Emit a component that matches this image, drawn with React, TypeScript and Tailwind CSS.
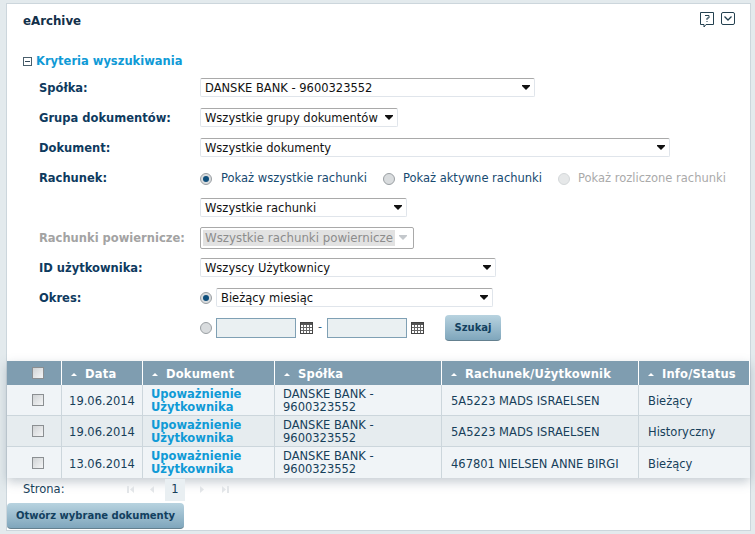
import { ReactNode } from 'react';

const rows = [
  { date: '19.06.2014', account: '5A5223 MADS ISRAELSEN', status: 'Bieżący', alt: false },
  { date: '19.06.2014', account: '5A5223 MADS ISRAELSEN', status: 'Historyczny', alt: true },
  { date: '13.06.2014', account: '467801 NIELSEN ANNE BIRGI', status: 'Bieżący', alt: false },
];

function Arrow({ disabled }: { disabled?: boolean }) {
  return (
    <svg width="8" height="5" viewBox="0 0 8 5" className="shrink-0">
      <path d="M0 0h8v1L4 5 0 1z" fill={disabled ? '#c4c8cc' : '#111'} />
    </svg>
  );
}

function Select({ width, children }: { width: string; children: ReactNode }) {
  return (
    <div className={`${width} h-[19px] flex items-center justify-between pl-[4px] pr-[4px] bg-white border border-[#e0e5eb] border-t-[#a9a9a9] rounded-[2px] text-[11.5px] text-[#111] whitespace-nowrap`}>
      <span className="pt-[2px]">{children}</span>
      <Arrow />
    </div>
  );
}

function Radio({ checked, disabled }: { checked?: boolean; disabled?: boolean }) {
  return (
    <span className={`w-[12px] h-[12px] shrink-0 rounded-full border flex items-center justify-center ${disabled ? 'border-[#d4d8da] bg-[#e6e8e9]' : 'border-[#9a9fa3] bg-[#d9dcde]'}`}>
      {checked && <span className="w-[6px] h-[6px] rounded-full bg-[#0f4f7c]" />}
    </span>
  );
}

function Row({ label, muted, children }: { label?: string; muted?: boolean; children: ReactNode }) {
  return (
    <div className="flex items-center h-[30px] pb-px">
      <div className={`w-[161px] shrink-0 pt-[2px] text-[11.5px] font-bold ${muted ? 'text-[#a3a3a3]' : 'text-[#0e3a5e]'}`}>{label}</div>
      {children}
    </div>
  );
}

function CalendarIcon() {
  return (
    <svg width="13" height="12" viewBox="0 0 13 12" className="shrink-0">
      <rect x="0.500" y="0.500" width="12" height="11" fill="#fff" stroke="#444" />
      <rect x="1" y="1" width="11" height="2" fill="#555" />
      <path d="M3.500 3v8M6.500 3v8M9.500 3v8M1 5.500h11M1 8.500h11" stroke="#666" />
    </svg>
  );
}

function CheckBox() {
  return <span className="block w-[12px] h-[12px] border border-[#8b8f92] bg-gradient-to-br from-[#d0d3d5] to-[#f4f5f6]" />;
}

function SortHeader({ width, children }: { width: string; children: ReactNode }) {
  return (
    <div className={`${width} shrink-0 flex items-center gap-[8px] pl-[9px] pt-[3px] border-r border-white text-[11.5px] font-bold text-white tracking-[0.2px] whitespace-nowrap`}>
      <svg width="6" height="3" viewBox="0 0 6 3" className="shrink-0"><path d="M3 0l3 3H0z" fill="#fff" /></svg>
      {children}
    </div>
  );
}

function PagerIcon({ d }: { d: string }) {
  return (
    <svg width="7" height="7" viewBox="0 0 7 7" className="shrink-0"><path d={d} fill="#e2e5e8" /></svg>
  );
}

export default function App() {
  return (
    <div className="w-[755px] h-[534px] overflow-hidden bg-[#e3eaed] pt-[3px] pl-[6px] font-['DejaVu_Sans',sans-serif]">
      <div className="w-[745px] h-[528px] bg-white border border-[#ccd6dc] flex flex-col">
        {/* Header */}
        <div className="flex justify-between pl-[16px] pr-[15px] pt-[8px] h-[49px]">
          <div className="mt-[2px] text-[11.8px] font-bold text-[#12304a] leading-[14px]">eArchive</div>
          <div className="flex gap-[7px] h-[15px]">
            <svg width="14" height="16" viewBox="0 0 14 16">
              <path d="M.5.500h13v12H6L4 15v-2.500H.5z" fill="none" stroke="#23404f" />
              <path d="M5 3.500h4v2.500H7v2M7 9v1" fill="none" stroke="#23404f" />
            </svg>
            <svg width="14" height="14" viewBox="0 0 14 14">
              <rect x=".5" y=".5" width="13" height="12" rx="1.500" fill="none" stroke="#23404f" />
              <path d="M3.500 4.500L7 8l3.500-3.500" fill="none" stroke="#23404f" strokeWidth="1.300" />
            </svg>
          </div>
        </div>

        {/* Kryteria */}
        <div className="flex items-center gap-[4px] pl-[16px] h-[16px] mb-[4px]">
          <span className="w-[9px] h-[9px] border border-[#4a5f6c] flex items-center justify-center">
            <span className="w-[5px] h-px bg-[#33495a]" />
          </span>
          <span className="pt-px text-[11.5px] font-bold text-[#0f9ad6]">Kryteria wyszukiwania</span>
        </div>

        {/* Form */}
        <div className="pl-[32px]">
          <Row label="Spółka:"><Select width="w-[335px]">DANSKE BANK - 9600323552</Select></Row>
          <Row label="Grupa dokumentów:"><Select width="w-[198px]">Wszystkie grupy dokumentów</Select></Row>
          <Row label="Dokument:"><Select width="w-[470px]">Wszystkie dokumenty</Select></Row>
          <Row label="Rachunek:">
            <div className="flex items-center pt-[2px] text-[11.5px] whitespace-nowrap">
              <Radio checked />
              <span className="ml-[9px] text-[#174a70]">Pokaż wszystkie rachunki</span>
              <span className="ml-[16px]"><Radio /></span>
              <span className="ml-[8px] text-[#174a70]">Pokaż aktywne rachunki</span>
              <span className="ml-[16px]"><Radio disabled /></span>
              <span className="ml-[8px] text-[#aaaaaa]">Pokaż rozliczone rachunki</span>
            </div>
          </Row>
          <Row><Select width="w-[207px]">Wszystkie rachunki</Select></Row>
          <Row label="Rachunki powiernicze:" muted>
            <div className="w-[214px] h-[22px] flex items-center justify-between pl-[2px] pr-[6px] border border-[#a9a9a9] rounded-[2px] text-[11.8px] text-[#8c8c8c] whitespace-nowrap">
              <span className="bg-[#e2e2e2] px-[2px] leading-[16px]">Wszystkie rachunki powiernicze</span>
              <Arrow disabled />
            </div>
          </Row>
          <Row label="ID użytkownika:"><Select width="w-[296px]">Wszyscy Użytkownicy</Select></Row>
          <Row label="Okres:">
            <div className="flex items-center gap-[4px]">
              <Radio checked />
              <Select width="w-[277px]">Bieżący miesiąc</Select>
            </div>
          </Row>
          <Row>
            <div className="flex items-center">
              <Radio />
              <span className="ml-[4px] w-[80px] h-[20px] bg-[#eaf0f2] border border-[#7fa0b4]" />
              <span className="ml-[4px]"><CalendarIcon /></span>
              <span className="mx-[5px] text-[11px] text-[#174a70]">-</span>
              <span className="w-[80px] h-[20px] bg-[#eaf0f2] border border-[#7fa0b4]" />
              <span className="ml-[4px]"><CalendarIcon /></span>
              <button className="ml-[21px] w-[56px] h-[26px] rounded-[4px] bg-gradient-to-b from-[#b8d3e0] to-[#7fa6bc] border-b border-[#64808f] text-[10px] font-bold text-[#12405f]">Szukaj</button>
            </div>
          </Row>
        </div>

        {/* Table */}
        <div className="mt-[18px] shadow-[0_4px_10px_rgba(90,110,125,0.35)]">
          <div className="flex h-[24px] bg-[#7f9db0]">
            <div className="w-[55px] shrink-0 flex items-center justify-center pl-[8px] border-r border-white"><CheckBox /></div>
            <SortHeader width="w-[81px]">Data</SortHeader>
            <SortHeader width="w-[132px]">Dokument</SortHeader>
            <SortHeader width="w-[167px]">Spółka</SortHeader>
            <SortHeader width="w-[197px]">Rachunek/Użytkownik</SortHeader>
            <SortHeader width="flex-1">Info/Status</SortHeader>
          </div>
          {rows.map((row, i) => (
            <div key={i} className={`flex h-[31px] text-[11.5px] leading-[13px] text-[#173f5a] ${row.alt ? 'bg-[#e6ecef]' : 'bg-[#f0f4f7]'} ${i < 2 ? 'border-b border-[#ccd6dc]' : ''}`}>
              <div className="w-[55px] shrink-0 flex items-center justify-center pl-[8px] border-r border-[#ccd6dc]"><CheckBox /></div>
              <div className="w-[81px] shrink-0 flex items-center justify-center pt-[3px] border-r border-[#ccd6dc]">{row.date}</div>
              <div className="w-[132px] shrink-0 pl-[8px] pt-[3px] border-r border-[#ccd6dc] font-bold text-[#0f9ad6]">Upoważnienie<br />Użytkownika</div>
              <div className="w-[167px] shrink-0 pl-[8px] pt-[3px] border-r border-[#ccd6dc]">DANSKE BANK -<br />9600323552</div>
              <div className="w-[197px] shrink-0 flex items-center pl-[9px] pt-[3px] border-r border-[#ccd6dc] whitespace-nowrap">{row.account}</div>
              <div className="flex-1 flex items-center pl-[9px] pt-[3px]">{row.status}</div>
            </div>
          ))}
        </div>

        {/* Pager */}
        <div className="flex items-center h-[23px] pl-[16px] text-[11.5px] text-[#173f5a]">
          <span className="w-[104px]">Strona:</span>
          <span className="w-[21px]"><PagerIcon d="M0 0h2v7H0zM7 0v7L3 3.500z" /></span>
          <span className="w-[17px]"><PagerIcon d="M6 0v7L2 3.500z" /></span>
          <span className="w-[20px] h-[22px] bg-[#e9eff2] flex items-center justify-center">1</span>
          <span className="ml-[14px] w-[23px]"><PagerIcon d="M1 0v7l4-3.500z" /></span>
          <span className="w-[20px]"><PagerIcon d="M0 0v7l4-3.500zM5 0h2v7H5z" /></span>
        </div>
        <div className="pt-[1px]">
          <button className="w-[177px] h-[26px] rounded-[4px] bg-gradient-to-b from-[#b8d3e0] to-[#7fa6bc] border-b border-[#64808f] text-[10px] font-bold text-[#12405f]">Otwórz wybrane dokumenty</button>
        </div>
      </div>
    </div>
  );
}
